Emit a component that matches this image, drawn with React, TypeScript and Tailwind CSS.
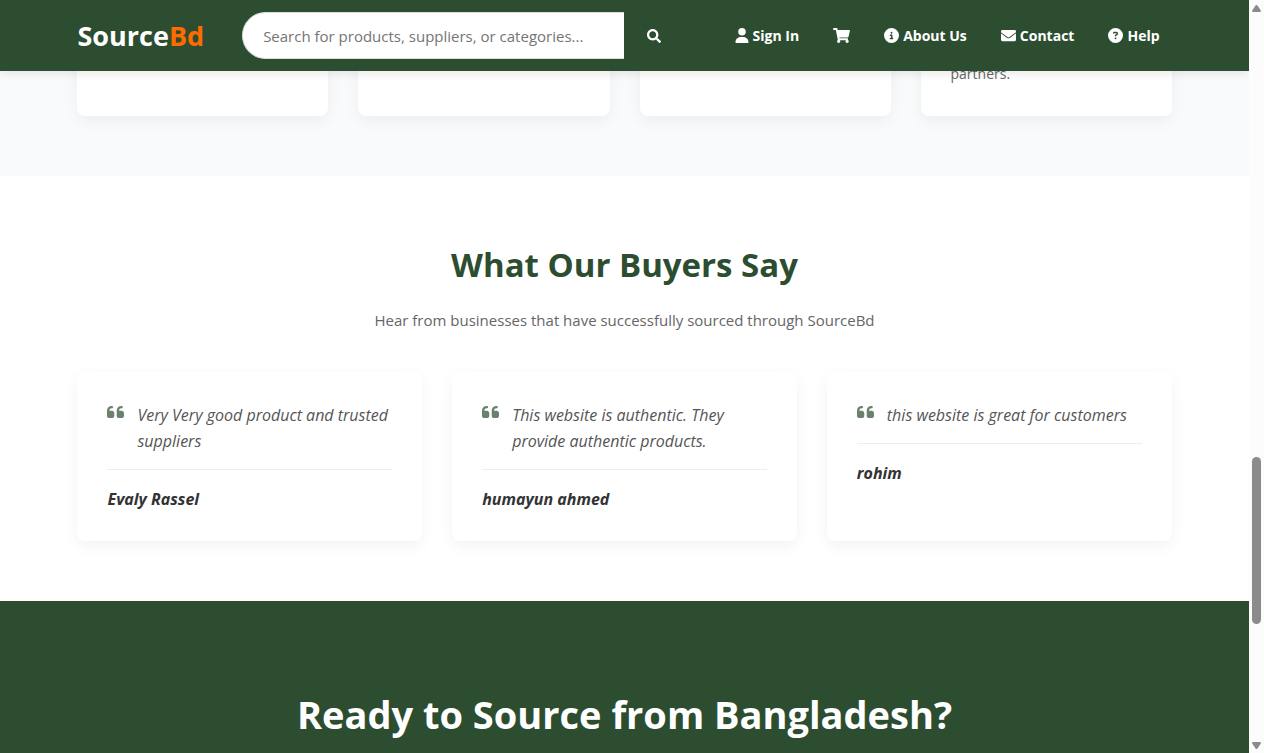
import { FaEnvelope, FaSearch, FaShoppingCart } from "react-icons/fa";
import { FaCircleInfo, FaCircleQuestion, FaQuoteLeft, FaUser } from "react-icons/fa6";

const testimonials = [
  { quote: "Very Very good product and trusted suppliers", author: "Evaly Rassel" },
  { quote: "This website is authentic. They provide authentic products.", author: "humayun ahmed" },
  { quote: "this website is great for customers", author: "rohim" },
];

const features = ["", "", "", "partners."];

const navItems = [
  { label: "Sign In", icon: <FaUser className="h-[15px] w-[14px]" />, text: true },
  { label: "Cart", icon: <FaShoppingCart className="h-[15px] w-[17px]" />, text: false },
  { label: "About Us", icon: <FaCircleInfo className="size-[15px]" />, text: true },
  { label: "Contact", icon: <FaEnvelope className="size-[15px]" />, text: true },
  { label: "Help", icon: <FaCircleQuestion className="size-[15px]" />, text: true },
];

function Header() {
  return (
    <header className="relative z-10 shrink-0 bg-[#2d4d31] py-3 shadow-[0_2px_10px_rgba(0,0,0,0.1)]">
      <div className="mx-auto flex w-[90%] items-center px-[15px]">
        <a href="#home" className="text-[27px] leading-[47px] font-bold text-white">
          Source<span className="text-[#ff6b00]">Bd</span>
        </a>
        <form className="ml-[38px] flex min-w-0 flex-1" onSubmit={(e) => e.preventDefault()}>
          <input
            type="search"
            aria-label="Search"
            placeholder="Search for products, suppliers, or categories..."
            className="h-[47px] min-w-0 flex-1 rounded-l-full border border-r-0 border-[#dddddd] bg-white px-5 text-[15px] text-[#333333] outline-none placeholder:text-[#757575]"
          />
          <button type="submit" aria-label="Submit search" className="flex w-[60px] items-center justify-center text-white">
            <FaSearch className="size-[14px]" />
          </button>
        </form>
        <nav className="mr-3 ml-[51px] flex items-center gap-[34px] text-sm leading-6 font-bold text-white">
          {navItems.map((item) => (
            <a key={item.label} href="#nav" aria-label={item.label} className="flex items-center gap-1 whitespace-nowrap">
              {item.icon}
              {item.text && <span>{item.label}</span>}
            </a>
          ))}
        </nav>
      </div>
    </header>
  );
}

function Scrollbar() {
  return (
    <div className="flex w-[15px] shrink-0 flex-col items-center bg-[#fcfcfc] pt-[5px] pb-1" aria-hidden="true">
      <svg viewBox="0 0 9 7" className="h-[7px] w-[9px]">
        <path d="M4.5 0Q5.2 0 5.7 .8L8.8 5.5Q9.3 7 8 7H1Q-.3 7 .2 5.5L3.3 .8Q3.8 0 4.5 0Z" fill="#8b8b8b" />
      </svg>
      <div className="flex-[445]" />
      <div className="w-[9px] flex-[167] rounded-full bg-[#8b8b8b]" />
      <div className="flex-[118]" />
      <svg viewBox="0 0 9 7" className="h-[7px] w-[9px]">
        <path d="M4.5 7Q5.2 7 5.7 6.2L8.8 1.5Q9.3 0 8 0H1Q-.3 0 .2 1.5L3.3 6.2Q3.8 7 4.5 7Z" fill="#8b8b8b" />
      </svg>
    </div>
  );
}

export default function App() {
  return (
    <div className="flex h-screen overflow-hidden bg-white font-['Open_Sans',sans-serif]">
      <div className="flex min-w-0 flex-1 flex-col overflow-hidden">
        <Header />
        <main>
          <section className="-mt-10 bg-[#f8fafc] pb-[60px]">
            <div className="mx-auto grid w-[90%] grid-cols-4 gap-[30px] px-[15px]">
              {features.map((text, i) => (
                <div key={i} className="rounded-lg bg-white p-[30px] shadow-[0_5px_15px_rgba(0,0,0,0.05)]">
                  <p className="text-sm leading-[25px] text-[#666666]">{text}</p>
                </div>
              ))}
            </div>
          </section>

          <section className="py-[60px]">
            <div className="mx-auto w-[90%] px-[15px]">
              <h2 className="text-center text-[33px] leading-[58px] font-bold text-[#2d4d31]">What Our Buyers Say</h2>
              <p className="mt-[13px] text-center text-[15px] leading-[26px] text-[#666666]">
                Hear from businesses that have successfully sourced through SourceBd
              </p>
              <div className="mt-[39px] grid grid-cols-3 gap-[30px]">
                {testimonials.map((item) => (
                  <figure key={item.author} className="rounded-lg bg-white px-[30px] pt-[30px] pb-[29px] italic shadow-[0_5px_15px_rgba(0,0,0,0.05)]">
                    <blockquote className="flex gap-[13px] text-base leading-[26px] text-[#555555]">
                      <FaQuoteLeft className="h-5 w-[17px] shrink-0 text-[#2d4d31] opacity-70" />
                      <p>{item.quote}</p>
                    </blockquote>
                    <figcaption className="mt-[15px] border-t border-[#eeeeee] pt-4 text-base leading-[26px] font-bold text-[#333333]">
                      {item.author}
                    </figcaption>
                  </figure>
                ))}
              </div>
            </div>
          </section>

          <section className="bg-[#2d4d31] px-[15px] py-20">
            <h2 className="text-center text-[38px] leading-[66px] font-bold text-white">Ready to Source from Bangladesh?</h2>
          </section>
        </main>
      </div>
      <Scrollbar />
    </div>
  );
}
